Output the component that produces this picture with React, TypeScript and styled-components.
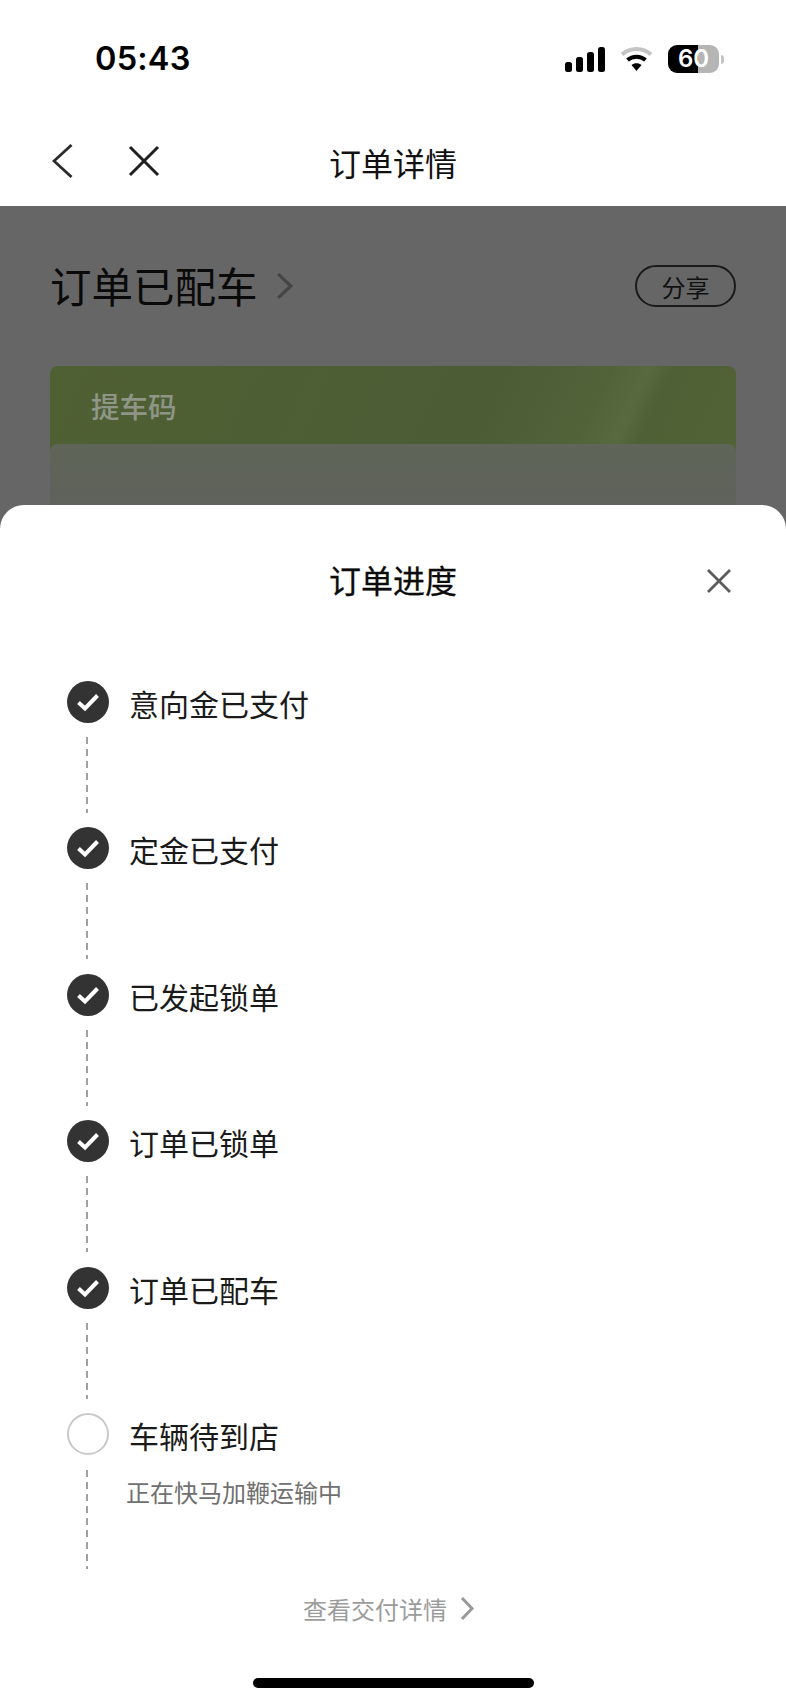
import React from "react";
import styled, { createGlobalStyle } from "styled-components";

const Global = createGlobalStyle`
  html, body { margin: 0; padding: 0; background: #fff; }
  body { font-family: "Noto Sans CJK SC", "Noto Sans", sans-serif; }
  * { box-sizing: border-box; }
`;

const Screen = styled.div`
  width: 786px;
  height: 1704px;
  overflow: hidden;
  display: flex;
  flex-direction: column;
  background: #fff;
`;

const StatusBar = styled.div`
  height: 118px;
  padding: 0 62px 0 95px;
  display: flex;
  align-items: flex-start;
  justify-content: space-between;
`;

const Time = styled.div`
  margin-top: 36px;
  font-family: "Inter", "Liberation Sans", sans-serif;
  font-size: 32.5px;
  line-height: 46px;
  font-weight: 600;
  letter-spacing: 0.2px;
  color: #000;
`;

const StatusIcons = styled.div`
  margin-top: 44px;
  display: flex;
  align-items: center;
  gap: 15px;
  height: 30px;
`;

const Battery = styled.div`
  position: relative;
  width: 51px;
  height: 28px;
  border-radius: 9px;
  overflow: hidden;
  background: linear-gradient(90deg, #000 0 58%, #b5b5b5 58% 100%);
  color: #fff;
  font-family: "Inter", "Liberation Sans", sans-serif;
  font-size: 24px;
  font-weight: 600;
  line-height: 28px;
  text-align: center;
`;

const BatteryCap = styled.div`
  width: 3px;
  height: 9px;
  margin-left: -13px;
  border-radius: 0 3px 3px 0;
  background: #c4c4c4;
`;

const NavBar = styled.div`
  height: 88px;
  padding: 0 0 0 52px;
  display: flex;
  align-items: center;
  position: relative;
`;

const NavTitle = styled.div`
  position: absolute;
  left: 0;
  right: 0;
  top: 21px;
  text-align: center;
  font-size: 32px;
  line-height: 46px;
  color: #111;
`;

const NavIcons = styled.div`
  display: flex;
  align-items: center;
  gap: 55px;
  margin-top: -2px;
`;

const Dimmed = styled.div`
  height: 323px;
  background: #666;
  padding: 59px 50px 0 50px;
`;

const HeadRow = styled.div`
  display: flex;
  align-items: center;
  justify-content: space-between;
  height: 42px;
`;

const StatusLink = styled.div`
  display: flex;
  align-items: center;
  gap: 17px;
`;

const StatusTitle = styled.div`
  font-size: 41.5px;
  line-height: 56px;
  margin-top: -3px;
  color: #0a0a0a;
`;

const ShareButton = styled.div`
  width: 101px;
  height: 42px;
  border: 2px solid #1a1a1a;
  border-radius: 21px;
  display: flex;
  align-items: center;
  justify-content: center;
  font-size: 24px;
  color: #111;
`;

const CodeCard = styled.div`
  margin: 59px 0 0 0;
  height: 160px;
  border-radius: 8px;
  background: linear-gradient(115deg, #4f6033 0%, #4c5c35 60%, #526239 74%, #58683f 79%, #4f6036 82%, #526337 100%);
  overflow: hidden;
`;

const CodeLabel = styled.div`
  height: 78px;
  padding: 19px 0 0 41px;
  font-size: 28.5px;
  line-height: 42px;
  font-weight: 500;
  color: #8f9687;
`;

const CodeInner = styled.div`
  height: 82px;
  border-radius: 8px 8px 0 0;
  background: linear-gradient(180deg, #5f6558 0%, #5e625a 60%, #626462 100%);
`;

const Sheet = styled.div`
  flex: 1;
  margin-top: -24px;
  position: relative;
  background: #fff;
  border-radius: 24px 24px 0 0;
  display: flex;
  flex-direction: column;
`;

const SheetHeader = styled.div`
  height: 176px;
  position: relative;
`;

const SheetTitle = styled.div`
  padding-top: 51px;
  text-align: center;
  font-size: 32px;
  line-height: 46px;
  color: #0c0c0c;
  -webkit-text-stroke: 0.3px #0c0c0c;
`;

const SheetClose = styled.div`
  position: absolute;
  right: 54px;
  top: 63px;
  display: flex;
`;

const Steps = styled.div`
  padding-left: 67px;
  display: flex;
  flex-direction: column;
`;

const Step = styled.div<{ $tall?: boolean }>`
  display: grid;
  grid-template-columns: 42px 1fr;
  column-gap: 21px;
  height: ${(p) => (p.$tall ? "170px" : "146.4px")};
`;

const Rail = styled.div`
  display: flex;
  flex-direction: column;
  align-items: center;
`;

const Circle = styled.div<{ $done: boolean }>`
  width: 42px;
  height: 42px;
  flex: none;
  border-radius: 50%;
  display: flex;
  align-items: center;
  justify-content: center;
  background: ${(p) => (p.$done ? "#333" : "#fff")};
  border: ${(p) => (p.$done ? "none" : "2px solid #c9c9c9")};
`;

const Dash = styled.div<{ $long?: boolean }>`
  margin: ${(p) => (p.$long ? "15px" : "14px")} 2px 0 0;
  width: 2px;
  height: ${(p) => (p.$long ? "99px" : "76px")};
  background: repeating-linear-gradient(180deg, #a0a0a0 0 7px, transparent 7px 12px);
`;

const StepBody = styled.div`
  display: flex;
  flex-direction: column;
`;

const StepText = styled.div`
  font-size: 30px;
  line-height: 46px;
  margin: -1px 0 0 -1px;
  color: #1a1a1a;
`;

const StepNote = styled.div`
  margin: 16px 0 0 -4px;
  font-size: 24px;
  line-height: 36px;
  color: #707070;
`;

const DetailLink = styled.div`
  margin: 8px 0 0 303px;
  display: flex;
  align-items: center;
  gap: 12px;
  font-size: 24px;
  line-height: 36px;
  color: #9c9c9c;
`;

const HomeBar = styled.div`
  position: absolute;
  left: 253px;
  bottom: 16px;
  width: 281px;
  height: 10px;
  border-radius: 5px;
  background: #000;
`;

const Check = () => (
  <svg width="24" height="20" viewBox="0 0 24 20" fill="none">
    <path d="M2.5 10.5 L9 16.5 L21.5 3.5" stroke="#fff" strokeWidth="4" strokeLinejoin="miter" />
  </svg>
);

const Chevron = ({ w, h, color, sw }: { w: number; h: number; color: string; sw: number }) => (
  <svg width={w} height={h} viewBox={`0 0 ${w} ${h}`} fill="none">
    <path d={`M${sw} ${sw} L${w - sw} ${h / 2} L${sw} ${h - sw}`} stroke={color} strokeWidth={sw} strokeLinejoin="miter" />
  </svg>
);

const steps = ["意向金已支付", "定金已支付", "已发起锁单", "订单已锁单", "订单已配车"];

export default function App() {
  return (
    <Screen>
      <Global />
      <StatusBar>
        <Time>05:43</Time>
        <StatusIcons>
          <svg width="40" height="25" viewBox="0 0 40 25" fill="#000">
            <rect x="0" y="15" width="7" height="10" rx="2.5" />
            <rect x="11" y="10" width="7" height="15" rx="2.5" />
            <rect x="22" y="5" width="7" height="20" rx="2.5" />
            <rect x="33" y="0" width="7" height="25" rx="2.5" />
          </svg>
          <svg width="33" height="26" viewBox="0 0 33 26" fill="none">
            <path d="M2 8.5 C10 1 23 1 31 8.5" stroke="#c4c4c4" strokeWidth="4" />
            <path d="M7.5 14 C12.5 9.5 20.5 9.5 25.5 14" stroke="#000" strokeWidth="4" />
            <path d="M11.5 19 L16.5 25 L21.5 19 C18.5 16.5 14.5 16.5 11.5 19 Z" fill="#000" />
          </svg>
          <Battery>60</Battery>
          <BatteryCap />
        </StatusIcons>
      </StatusBar>
      <NavBar>
        <NavTitle>订单详情</NavTitle>
        <NavIcons>
          <svg width="21" height="34" viewBox="0 0 21 34" fill="none">
            <path d="M19.5 1 L2 17 L19.5 33" stroke="#2b2b2b" strokeWidth="2.8" />
          </svg>
          <svg width="32" height="32" viewBox="0 0 32 32" fill="none">
            <path d="M2 2 L30 30 M30 2 L2 30" stroke="#1f1f1f" strokeWidth="3" />
          </svg>
        </NavIcons>
      </NavBar>
      <Dimmed>
        <HeadRow>
          <StatusLink>
            <StatusTitle>订单已配车</StatusTitle>
            <Chevron w={19} h={30} color="#454545" sw={3.2} />
          </StatusLink>
          <ShareButton>分享</ShareButton>
        </HeadRow>
        <CodeCard>
          <CodeLabel>提车码</CodeLabel>
          <CodeInner />
        </CodeCard>
      </Dimmed>
      <Sheet>
        <SheetHeader>
          <SheetTitle>订单进度</SheetTitle>
          <SheetClose>
            <svg width="26" height="26" viewBox="0 0 26 26" fill="none">
              <path d="M2 2 L24 24 M24 2 L2 24" stroke="#5c5c5c" strokeWidth="2.8" />
            </svg>
          </SheetClose>
        </SheetHeader>
        <Steps>
          {steps.map((s) => (
            <Step key={s}>
              <Rail>
                <Circle $done>
                  <Check />
                </Circle>
                <Dash />
              </Rail>
              <StepBody>
                <StepText>{s}</StepText>
              </StepBody>
            </Step>
          ))}
          <Step $tall>
            <Rail>
              <Circle $done={false} />
              <Dash $long />
            </Rail>
            <StepBody>
              <StepText>车辆待到店</StepText>
              <StepNote>正在快马加鞭运输中</StepNote>
            </StepBody>
          </Step>
        </Steps>
        <DetailLink>
          查看交付详情
          <Chevron w={16} h={27} color="#999" sw={3} />
        </DetailLink>
        <HomeBar />
      </Sheet>
    </Screen>
  );
}
